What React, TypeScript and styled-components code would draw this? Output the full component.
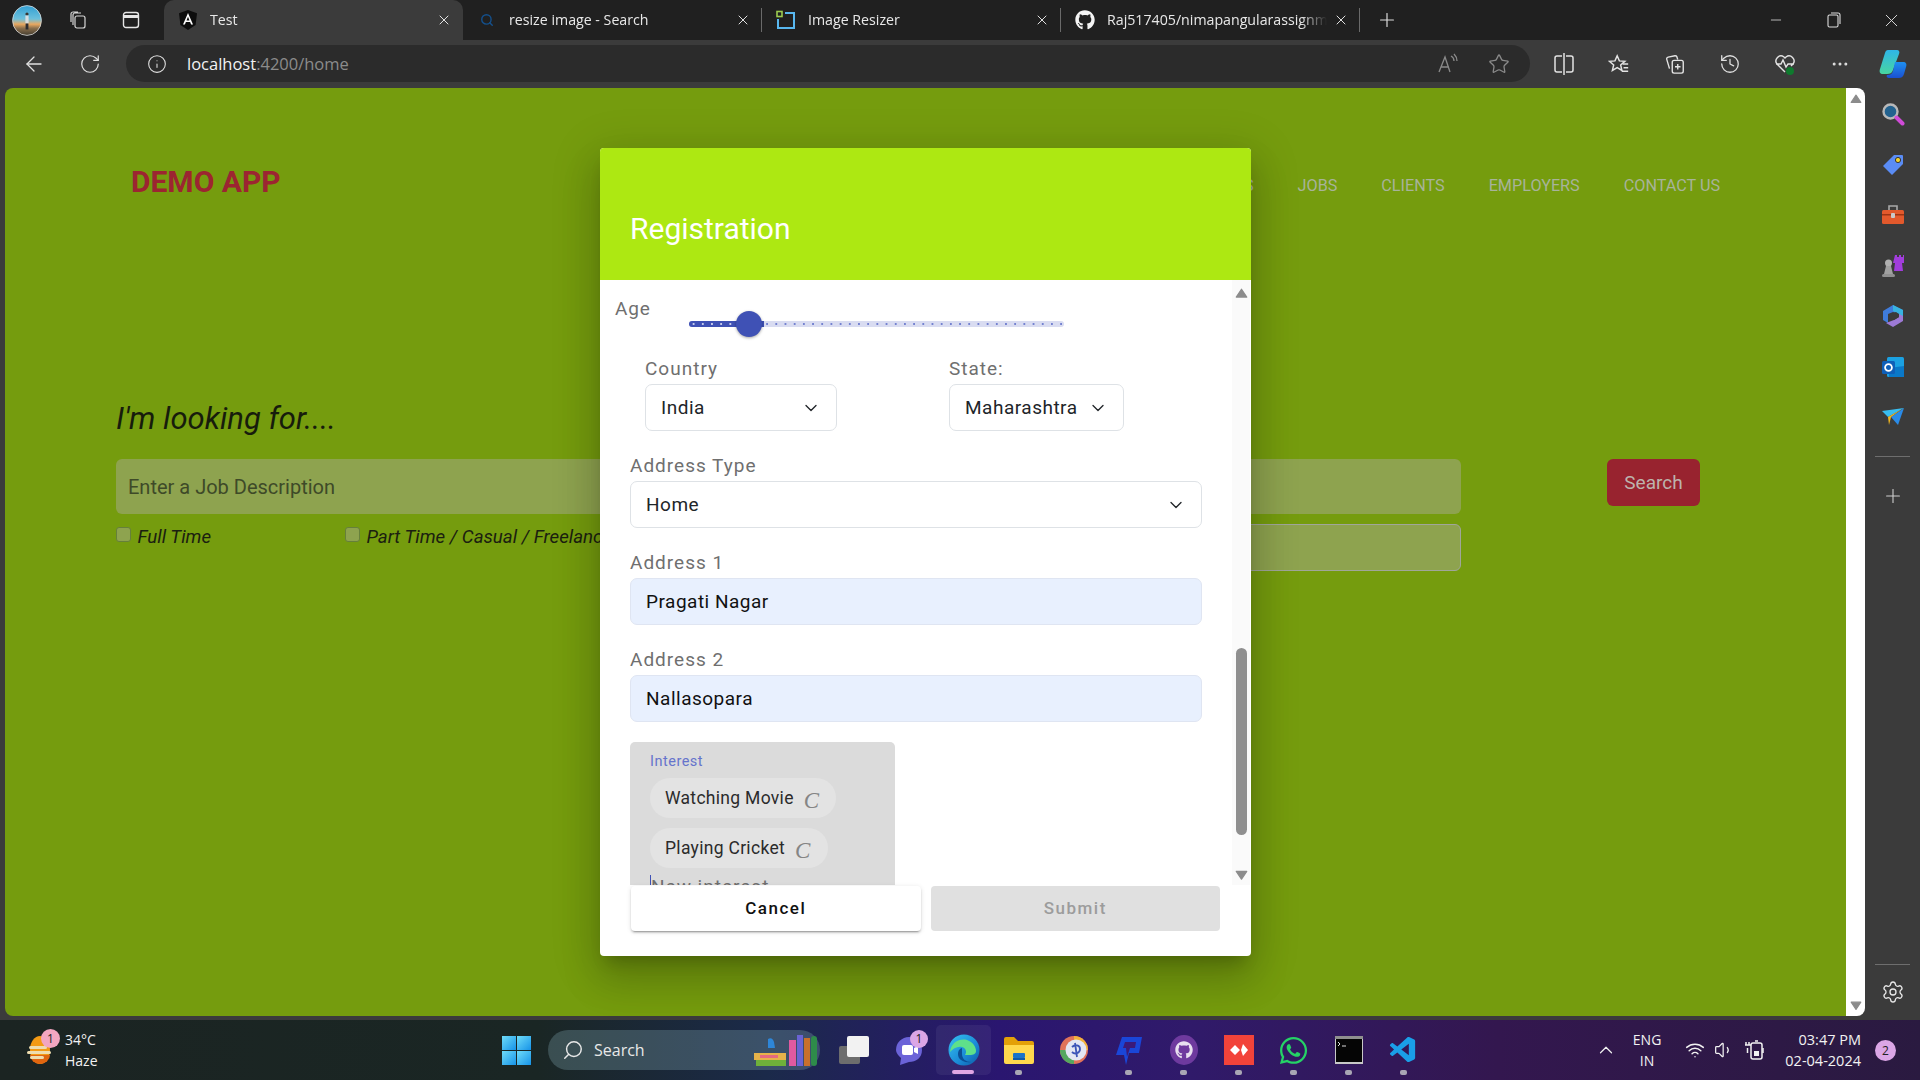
import React from "react";
import styled, { createGlobalStyle } from "styled-components";
import {
  ArrowLeft,
  ChevronDown,
  ChevronUp,
  History,
  Info,
  Minus,
  MoreHorizontal,
  Plus,
  RotateCw,
  Search as SearchIcon,
  Settings,
  Star,
  Volume1,
  Wifi,
  X,
} from "lucide-react";
import { FaGithub, FaWhatsapp } from "react-icons/fa";
import { VscVscode } from "react-icons/vsc";

const GlobalStyle = createGlobalStyle`
  html, body {
    margin: 0;
    width: 1920px;
    height: 1080px;
    overflow: hidden;
    background: #3b3b3b;
    font-family: Roboto, "Liberation Sans", sans-serif;
  }
  * { box-sizing: border-box; }
`;

const Screen = styled.div`
  width: 1920px;
  height: 1080px;
  display: flex;
  flex-direction: column;
`;

/* ---------- tab strip ---------- */

const TabStrip = styled.div`
  height: 40px;
  display: flex;
  align-items: stretch;
  background: #202020;
  color: #e8e8e8;
  font-family: "Open Sans", sans-serif;
  font-size: 14.2px;
`;

const AvatarCell = styled.div`
  width: 54px;
  display: flex;
  align-items: center;
  justify-content: center;
`;

const StripButton = styled.div<{ $width: number }>`
  width: ${(p) => p.$width}px;
  display: flex;
  align-items: center;
  justify-content: center;
  color: #dcdcdc;
`;

const TabSpacer = styled.div`
  width: 4px;
`;

const Tab = styled.div<{ $active?: boolean; $sep?: boolean }>`
  position: relative;
  width: 299px;
  display: flex;
  align-items: center;
  padding-left: 14px;
  background: ${(p) => (p.$active ? "#3b3b3b" : "transparent")};
  border-radius: ${(p) => (p.$active ? "10px 10px 0 0" : "0")};
  &::after {
    content: "";
    display: ${(p) => (p.$sep ? "block" : "none")};
    position: absolute;
    right: 0;
    top: 8px;
    height: 24px;
    width: 1px;
    background: #6a6a6a;
  }
`;

const TabIcon = styled.div`
  width: 20px;
  height: 20px;
  display: flex;
  align-items: center;
  justify-content: center;
  margin-right: 12px;
`;

const TabTitle = styled.div`
  width: 220px;
  padding-bottom: 2px;
  white-space: nowrap;
  overflow: hidden;
  -webkit-mask-image: linear-gradient(to right, #000 88%, transparent);
`;

const TabClose = styled.div`
  width: 16px;
  margin-left: 6px;
  display: flex;
  justify-content: center;
  color: #efefef;
`;

const WindowControls = styled.div`
  margin-left: auto;
  display: flex;
`;

/* ---------- toolbar ---------- */

const Toolbar = styled.div`
  height: 48px;
  display: flex;
  align-items: center;
  background: #3b3b3b;
  color: #e0e0e0;
`;

const ToolSlot = styled.div<{ $width: number }>`
  width: ${(p) => p.$width}px;
  flex: none;
  display: flex;
  align-items: center;
  justify-content: center;
`;

const AddressBar = styled.div`
  width: 1404px;
  height: 37px;
  display: flex;
  align-items: center;
  background: #2b2b2b;
  border-radius: 19px;
  padding-left: 21px;
  margin-bottom: 1px;
  font-family: "Open Sans", sans-serif;
  font-size: 16.5px;
`;

const Url = styled.div`
  margin-left: 20px;
  color: #f2f2f2;
  span {
    color: #8c8c8c;
  }
`;

const BarEnd = styled.div`
  margin-left: auto;
  display: flex;
  align-items: center;
  color: #8a8a8a;
`;

/* ---------- content ---------- */

const ContentRow = styled.div`
  height: 932px;
  display: flex;
  padding: 0 0 4px 5px;
  background: #3b3b3b;
`;

const Page = styled.div`
  position: relative;
  width: 1841px;
  background: #759c0e;
  border-radius: 8px 0 0 8px;
  overflow: hidden;
  padding-left: 111px;
  color: #1b2010;
`;

const PageScroll = styled.div`
  width: 19px;
  background: #fff;
  border-radius: 0 8px 8px 0;
  display: flex;
  flex-direction: column;
  justify-content: space-between;
  align-items: center;
  padding: 6px 0 5px;
`;

const Header = styled.header`
  display: flex;
  justify-content: space-between;
  padding: 76px 126px 0 15px;
`;

const Logo = styled.div`
  font-size: 30px;
  line-height: 36px;
  font-weight: 700;
  color: #9c2531;
`;

const Nav = styled.nav`
  display: flex;
  gap: 44px;
  padding-top: 10px;
  font-size: 16.2px;
  line-height: 24px;
  color: #a8b39a;
`;

const Heading = styled.div`
  margin-top: 199px;
  font-size: 31px;
  line-height: 40px;
  font-style: italic;
  font-weight: 400;
  color: #171c0c;
`;

const SearchGrid = styled.div`
  margin-top: 20px;
  display: grid;
  grid-template-columns: 1345px 93px;
  column-gap: 146px;
  align-items: start;
`;

const JobInput = styled.div`
  height: 55px;
  background: #8ea34f;
  border-radius: 6px;
  padding-left: 12px;
  font-size: 20px;
  line-height: 57px;
  color: #3e4a28;
`;

const BelowRow = styled.div`
  display: flex;
  margin-top: 10px;
`;

const CheckItem = styled.div<{ $width: number }>`
  width: ${(p) => p.$width}px;
  padding-top: 3px;
  display: flex;
  align-items: flex-start;
  gap: 6.5px;
  font-size: 18.7px;
  font-style: italic;
  line-height: 20px;
  white-space: nowrap;
`;

const CheckBox = styled.div`
  width: 15px;
  height: 15px;
  flex: none;
  background: #8ea34f;
  border: 1px solid #66803a;
  border-radius: 3px;
`;

const LocationInput = styled.div`
  margin-left: auto;
  width: 800px;
  height: 47px;
  background: #8ea34f;
  border: 1px solid #a0a69a;
  border-radius: 6px;
`;

const SearchButton = styled.div`
  height: 47px;
  background: #98232f;
  border-radius: 6px;
  color: #bdb3ad;
  font-size: 19px;
  line-height: 47px;
  text-align: center;
`;

/* ---------- dialog ---------- */

const Dialog = styled.div`
  position: absolute;
  left: 595px;
  top: 60px;
  width: 651px;
  height: 808px;
  background: #fff;
  border-radius: 4px;
  overflow: hidden;
  display: flex;
  flex-direction: column;
  box-shadow: 0 11px 15px -7px rgba(0, 0, 0, 0.2),
    0 24px 38px 3px rgba(0, 0, 0, 0.14), 0 9px 46px 8px rgba(0, 0, 0, 0.12);
`;

const DialogHeader = styled.div`
  height: 132px;
  flex: none;
  padding: 61px 0 0 30px;
  background: #ade812;
  color: #fff;
  font-size: 30px;
  line-height: 40px;
`;

const DialogBody = styled.div`
  height: 605px;
  flex: none;
  display: flex;
`;

const Form = styled.div`
  width: 632px;
  height: 605px;
  overflow: hidden;
  padding-top: 17px;
`;

const DialogScroll = styled.div`
  position: relative;
  width: 18px;
  background: #fafafa;
  display: flex;
  flex-direction: column;
  justify-content: space-between;
  align-items: center;
  padding: 8px 0 5px 1px;
`;

const ScrollThumb = styled.div`
  position: absolute;
  top: 368px;
  left: 4px;
  width: 11px;
  height: 187px;
  border-radius: 6px;
  background: #8f8f8f;
`;

const AgeRow = styled.div`
  display: flex;
  height: 40px;
  padding-left: 15px;
`;

const AgeLabel = styled.div`
  width: 74px;
  font-size: 19px;
  line-height: 24px;
  letter-spacing: 0.9px;
  color: #6f6f6f;
`;

const Slider = styled.div`
  position: relative;
  width: 375px;
  height: 6px;
  margin-top: 24px;
  border-radius: 3px;
  background: #d9dcf1;
`;

const TickLayer = styled.div`
  position: absolute;
  inset: 0;
  border-radius: 3px;
  background-image: radial-gradient(circle, #7482d0 0.8px, transparent 1.1px);
  background-size: 9.2px 6px;
`;

const SliderActive = styled.div`
  position: absolute;
  left: 0;
  top: 0;
  bottom: 0;
  width: 75px;
  border-radius: 3px 0 0 3px;
  background-color: #3f51b5;
  background-image: radial-gradient(circle, #c5cbec 0.8px, transparent 1.1px);
  background-size: 9.2px 6px;
`;

const SliderThumb = styled.div`
  position: absolute;
  left: 47px;
  top: -10px;
  width: 26px;
  height: 26px;
  border-radius: 50%;
  background: #3f51b5;
  box-shadow: 0 1px 3px rgba(0, 0, 0, 0.35);
`;

const LocationRow = styled.div`
  display: flex;
  gap: 112px;
  padding-left: 45px;
`;

const Field = styled.div<{ $width: number }>`
  width: ${(p) => p.$width}px;
  margin-top: 21px;
`;

const FieldLabel = styled.div`
  font-size: 19px;
  line-height: 22px;
  letter-spacing: 1px;
  color: #6f6f6f;
  margin-bottom: 4px;
  white-space: nowrap;
`;

const Control = styled.div<{ $filled?: boolean }>`
  height: 47px;
  display: flex;
  align-items: center;
  justify-content: space-between;
  padding: 0 15px;
  border: 1px solid ${(p) => (p.$filled ? "#dfe5f2" : "#dee2e6")};
  border-radius: 7px;
  background: ${(p) => (p.$filled ? "#e8f0fe" : "#fff")};
  font-size: 19px;
  letter-spacing: 0.5px;
  color: #212529;
  svg {
    flex: none;
  }
`;

const FilledText = styled.span`
  color: #111;
`;

const StackedFields = styled.div`
  margin-top: 24px;
  display: flex;
  flex-direction: column;
  gap: 24px;
  padding-left: 30px;
`;

const PlainField = styled.div`
  width: 572px;
`;

const InterestBox = styled.div`
  width: 265px;
  height: 200px;
  margin: 20px 0 0 30px;
  padding: 12px 16px 0 20px;
  background: #dbdbdb;
  border-radius: 5px 5px 0 0;
  display: flex;
  flex-direction: column;
  align-items: flex-start;
`;

const InterestLabel = styled.div`
  font-size: 14.5px;
  line-height: 16px;
  letter-spacing: 0.5px;
  color: #6674cc;
  margin-bottom: 8px;
`;

const Chip = styled.div`
  height: 40px;
  margin-bottom: 10px;
  padding: 0 17px 0 15px;
  display: flex;
  align-items: center;
  gap: 10px;
  border-radius: 20px;
  background: #e3e3e3;
  font-size: 17.5px;
  letter-spacing: 0.3px;
  color: #2b2b2b;
`;

const ChipRemove = styled.span`
  font-family: "Liberation Serif", serif;
  font-style: italic;
  font-size: 23px;
  line-height: 22px;
  margin-top: 5px;
  color: #858585;
`;

const NewInterest = styled.div`
  margin-top: -3px;
  height: 24px;
  border-left: 1px solid #3f51b5;
  font-size: 19px;
  line-height: 24px;
  letter-spacing: 1px;
  color: #6f6f6f;
  white-space: nowrap;
`;

const Actions = styled.div`
  flex: none;
  display: flex;
  gap: 10px;
  padding: 1px 0 0 31px;
`;

const ActionButton = styled.div<{ $disabled?: boolean }>`
  width: 289.5px;
  height: 45px;
  border-radius: 4px;
  text-align: center;
  font-size: 17px;
  font-weight: 500;
  line-height: 45px;
  letter-spacing: 1.5px;
  background: ${(p) => (p.$disabled ? "#e0e0e0" : "#fff")};
  color: ${(p) => (p.$disabled ? "#9c9c9c" : "#111")};
  box-shadow: ${(p) =>
    p.$disabled
      ? "none"
      : "0 3px 1px -2px rgba(0,0,0,.2), 0 2px 2px 0 rgba(0,0,0,.14), 0 1px 5px 0 rgba(0,0,0,.12)"};
`;

/* ---------- edge sidebar ---------- */

const SideBar = styled.aside`
  width: 55px;
  margin-bottom: -4px;
  display: flex;
  flex-direction: column;
  align-items: center;
  padding: 1px 0 3px;
  color: #cfcfcf;
`;

const SideSlot = styled.div`
  width: 100%;
  height: 50.5px;
  flex: none;
  display: flex;
  align-items: center;
  justify-content: center;
`;

const SideRule = styled.div<{ $auto?: boolean }>`
  width: 35px;
  height: 1px;
  flex: none;
  background: #6e6e6e;
  margin-top: ${(p) => (p.$auto ? "auto" : "13px")};
  margin-bottom: ${(p) => (p.$auto ? "2px" : "28px")};
`;

/* ---------- taskbar ---------- */

const Taskbar = styled.footer`
  height: 60px;
  display: flex;
  align-items: center;
  color: #f2f2f2;
  font-family: "Open Sans", sans-serif;
  font-size: 14px;
  background: linear-gradient(
    90deg,
    #1b2422 0%,
    #1a2624 28%,
    #1b2a4a 40%,
    #2a1670 52%,
    #301a6a 62%,
    #33174f 78%,
    #2a1a40 100%
  );
`;

const Weather = styled.div`
  width: 489px;
  display: flex;
  align-items: center;
  padding-left: 24px;
`;

const WeatherIcon = styled.div`
  position: relative;
  width: 30px;
  height: 30px;
  margin-right: 11px;
`;

const Badge = styled.div<{ $color: string; $size: number; $top: number; $left: number }>`
  position: absolute;
  width: ${(p) => p.$size}px;
  height: ${(p) => p.$size}px;
  top: ${(p) => p.$top}px;
  left: ${(p) => p.$left}px;
  border-radius: 50%;
  background: ${(p) => p.$color};
  color: #222;
  font-size: 12px;
  line-height: ${(p) => p.$size}px;
  text-align: center;
`;

const TwoLines = styled.div<{ $align?: string }>`
  display: flex;
  flex-direction: column;
  gap: 4px;
  line-height: 17px;
  text-align: ${(p) => p.$align ?? "left"};
`;

const Clock = styled(TwoLines)`
  font-size: 14.5px;
`;

const TaskSlot = styled.div<{ $active?: boolean }>`
  position: relative;
  width: 55px;
  height: 50px;
  flex: none;
  display: flex;
  align-items: center;
  justify-content: center;
  border-radius: 5px;
  background: ${(p) => (p.$active ? "rgba(255,255,255,.06)" : "transparent")};
`;

const RunDot = styled.div`
  position: absolute;
  bottom: 0;
  left: 24px;
  width: 7px;
  height: 5px;
  border-radius: 2px;
  background: #a9a6b4;
`;

const ActiveBar = styled.div`
  position: absolute;
  bottom: 1px;
  left: 16px;
  width: 22px;
  height: 4px;
  border-radius: 2px;
  background: #e0a6e4;
`;

const TaskSearch = styled.div`
  width: 272px;
  height: 40px;
  margin: 0 6px 0 4px;
  flex: none;
  display: flex;
  align-items: center;
  padding-left: 14px;
  border-radius: 20px;
  background: rgba(125, 160, 170, 0.33);
  font-size: 16px;
  color: #e8e8e8;
`;

const TaskSearchText = styled.span`
  margin-left: 10px;
`;

const Books = styled.div`
  margin-left: auto;
  display: flex;
`;

const Tray = styled.div`
  margin-left: auto;
  display: flex;
  align-items: center;
  padding-right: 24px;
`;

const TrayLang = styled(TwoLines)`
  margin: 0 24px 0 16px;
  text-align: center;
`;

const TrayIcons = styled.div`
  display: flex;
  align-items: center;
  gap: 9px;
  margin-right: 20px;
`;

const Notify = styled.div`
  width: 21px;
  height: 21px;
  margin-left: 14px;
  border-radius: 50%;
  background: #dba6e6;
  color: #222;
  font-size: 12px;
  line-height: 21px;
  text-align: center;
`;

/* ---------- drawn icons ---------- */

const Triangle: React.FC<{ down?: boolean; width: number }> = ({ down, width }) => (
  <svg width={width} height={width * 0.8} viewBox="0 0 10 8">
    <path d={down ? "M1 1h8L5 7z" : "M5 1l4 6H1z"} fill="#8c8c8c" stroke="#8c8c8c" strokeLinejoin="round" />
  </svg>
);

const Avatar = () => (
  <svg width="30" height="31" viewBox="0 0 30 31">
    <defs>
      <clipPath id="avatar-clip">
        <ellipse cx="15" cy="15.5" rx="14.5" ry="15" />
      </clipPath>
      <linearGradient id="avatar-sky" x1="0" y1="0" x2="0" y2="1">
        <stop offset="0" stopColor="#2f9ed3" />
        <stop offset="0.45" stopColor="#6cc0dc" />
        <stop offset="0.62" stopColor="#e9a860" />
        <stop offset="0.75" stopColor="#8b6f4c" />
        <stop offset="1" stopColor="#3c382e" />
      </linearGradient>
    </defs>
    <g clipPath="url(#avatar-clip)">
      <rect width="30" height="31" fill="url(#avatar-sky)" />
      <circle cx="15" cy="9" r="1.6" fill="#3a3530" />
      <rect x="13.4" y="10.5" width="3.2" height="8" fill="#d8dde0" />
      <rect x="13.6" y="18.5" width="2.8" height="6" fill="#2c2c30" />
    </g>
    <ellipse cx="15" cy="15.5" rx="14.4" ry="14.9" fill="none" stroke="#d8d8d8" strokeWidth="0.8" />
  </svg>
);

const Workspaces = () => (
  <svg width="20" height="20" viewBox="0 0 20 20" fill="none" stroke="#d8d8d8" strokeWidth="1.2">
    <rect x="7" y="6" width="10" height="12" rx="2" />
    <path d="M5 15V5a2 2 0 0 1 2-2h6M3 12V4a2 2 0 0 1 2-2h5" />
  </svg>
);

const TabsIcon = () => (
  <svg width="18" height="18" viewBox="0 0 18 18" fill="none" stroke="#e6e6e6" strokeWidth="1.4">
    <rect x="1.5" y="1.5" width="15" height="15" rx="2.5" />
    <path d="M1.5 5.5h15" strokeWidth="3" />
  </svg>
);

const AngularIcon = () => (
  <svg width="20" height="20" viewBox="0 0 20 20">
    <path d="M10 0L1 3.3l1.4 11.6L10 20l7.6-5.1L19 3.3z" fill="#0d0d0d" />
    <path d="M10 3L5 14.5h1.9l1-2.6h4.2l1 2.6H15zm-1.5 7.4L10 6.8l1.5 3.6z" fill="#fff" />
  </svg>
);

const ResizerIcon = () => (
  <svg width="20" height="20" viewBox="0 0 20 20" fill="none">
    <path d="M9 3h9v15H2V9" stroke="#58b7ef" strokeWidth="2" />
    <rect x="1" y="1.5" width="5" height="5" stroke="#9ccc50" strokeWidth="1.6" />
  </svg>
);

const ReadAloud = () => (
  <svg width="24" height="22" viewBox="0 0 24 22" fill="none" stroke="#8a8a8a" strokeWidth="1.3">
    <path d="M2 19L8 4l5 15M4 14h8" />
    <path d="M14 3c2 1 3 3 3 5M17 1c2 2 3 4 3 7" />
  </svg>
);

const SplitScreen = () => (
  <svg width="22" height="24" viewBox="0 0 22 24" fill="none" stroke="#e4e4e4" strokeWidth="1.5">
    <path d="M9 4H4a2 2 0 0 0-2 2v12a2 2 0 0 0 2 2h5M13 4h5a2 2 0 0 1 2 2v12a2 2 0 0 1-2 2h-5M11 1v22" />
  </svg>
);

const FavList = () => (
  <svg width="22" height="22" viewBox="0 0 24 24" fill="none" stroke="#e4e4e4" strokeWidth="1.6">
    <path d="M10 3l2.4 5.6 6 .5-4.6 4 1.4 5.9L10 16l-5.2 3 1.4-5.9-4.6-4 6-.5z" />
    <path d="M16 12h6M17 16h5M15 20h7" />
  </svg>
);

const Collections = () => (
  <svg width="22" height="22" viewBox="0 0 24 24" fill="none" stroke="#e4e4e4" strokeWidth="1.5">
    <path d="M6 17L3 7a2 2 0 0 1 1.5-2.5L12 3a2 2 0 0 1 2 1l1 3" />
    <rect x="9" y="8" width="12" height="14" rx="2" />
    <path d="M15 12v6M12 15h6" />
  </svg>
);

const Health = () => (
  <svg width="24" height="24" viewBox="0 0 24 24" fill="none">
    <path
      d="M12 20L4 12a5 5 0 0 1 7-7l1 1 1-1a5 5 0 0 1 7 7l-2 2M3 12h5l2-4 3 7 2-3h6"
      stroke="#e4e4e4"
      strokeWidth="1.4"
    />
    <circle cx="17" cy="19" r="4" fill="#0f7a2e" />
  </svg>
);

const CopilotLogo = () => (
  <svg width="28" height="30" viewBox="0 0 28 30">
    <defs>
      <linearGradient id="cp-a" x1="0" y1="0" x2="0" y2="1">
        <stop offset="0" stopColor="#2fb5e8" />
        <stop offset="1" stopColor="#48d6a0" />
      </linearGradient>
      <linearGradient id="cp-b" x1="0" y1="0" x2="0" y2="1">
        <stop offset="0" stopColor="#1e90f0" />
        <stop offset="1" stopColor="#1a50d0" />
      </linearGradient>
    </defs>
    <path d="M9 1h9c2 0 3 2 2 4L14 21c-1 3-3 4-6 4H4c-3 0-4-2-3-5L6 4c.5-2 1.5-3 3-3z" fill="url(#cp-a)" />
    <path d="M16 13h8c3 0 4 2 3 5l-2 7c-1 3-3 4-5 4H10c-2 0-3-2-2-3 3 0 5-1 6-4z" fill="url(#cp-b)" />
  </svg>
);

const SideMagnifier = () => (
  <svg width="24" height="24" viewBox="0 0 24 24">
    <circle cx="9.5" cy="9.5" r="7" fill="#23628f" stroke="#b8b8b8" strokeWidth="2.4" />
    <path d="M15.5 15.5l6 6" stroke="#d04bd8" strokeWidth="4" strokeLinecap="round" />
  </svg>
);

const SideTag = () => (
  <svg width="24" height="24" viewBox="0 0 24 24">
    <path d="M13 2h8a1 1 0 0 1 1 1v8L11 22 2 13z" fill="#5a8cf5" strokeLinejoin="round" />
    <circle cx="17" cy="7" r="2.6" fill="#f2d22e" stroke="#333" />
  </svg>
);

const SideToolbox = () => (
  <svg width="24" height="22" viewBox="0 0 24 22">
    <path d="M8 6V2h8v4" fill="none" stroke="#a8a8a8" strokeWidth="1.6" />
    <rect x="1" y="6" width="22" height="14" rx="1.5" fill="#e2592c" />
    <rect x="1" y="10" width="22" height="1.5" fill="#9e3413" />
    <rect x="10" y="9" width="4" height="5" rx="1" fill="#c9c9c9" />
  </svg>
);

const SideChess = () => (
  <svg width="24" height="24" viewBox="0 0 24 24">
    <path d="M14 1h2v2h2V1h2v2h2V1h1v8h-2l1 8h-9l1-8h-2z" fill="#a13ddc" />
    <circle cx="7.5" cy="9" r="3.5" fill="#b0b0b0" />
    <path d="M5 12h5l2 8H3z" fill="#a0a0a0" />
    <rect x="1" y="20" width="13" height="3" rx="1.5" fill="#909090" />
  </svg>
);

const SideM365 = () => (
  <svg width="22" height="24" viewBox="0 0 22 24">
    <path d="M11 1l10 5-4 4-6-2-5 2v9L1 16V7z" fill="#3f7cdc" />
    <path d="M21 6v11l-10 6-7-4 8-3 5-3v-3z" fill="#9d7ad6" />
    <path d="M11 1l10 5v6l-4-2-6-3z" fill="#38b3e0" />
    <path d="M8 10l6-2 3 2v3l-5 3-4-2z" fill="#3b3b3b" />
  </svg>
);

const SideOutlook = () => (
  <svg width="24" height="22" viewBox="0 0 24 22">
    <rect x="6" y="1" width="17" height="20" rx="1.5" fill="#1ba1e2" />
    <path d="M8 12l15-2v11H8z" fill="#0a78c8" />
    <rect x="1" y="5" width="13" height="13" rx="1.5" fill="#0f5fb8" />
    <circle cx="7.5" cy="11.5" r="3.4" fill="none" stroke="#fff" strokeWidth="1.8" />
  </svg>
);

const SidePlane = () => (
  <svg width="24" height="20" viewBox="0 0 24 20">
    <path d="M1 4l22-3L7 10z" fill="#38bdf0" />
    <path d="M23 1L17 18l-7-8z" fill="#2a8be8" />
    <path d="M7 10l14-8-11 8-2 8z" fill="#f2b71f" />
  </svg>
);

const WeatherGlyph = () => (
  <svg width="30" height="30" viewBox="0 0 30 30">
    <ellipse cx="16" cy="15" rx="10" ry="14" fill="#f39a14" />
    <path d="M6 20a10 9 0 0 0 20 0z" fill="#e0650f" />
    <g fill="#eedcae">
      <rect x="5" y="11" width="18" height="3" rx="1.5" />
      <rect x="3" y="16" width="24" height="3" rx="1.5" />
      <rect x="6" y="21" width="14" height="3" rx="1.5" />
    </g>
  </svg>
);

const WindowsLogo = () => (
  <svg width="29" height="29" viewBox="0 0 29 29">
    <defs>
      <linearGradient id="win" x1="0" y1="0" x2="1" y2="1">
        <stop offset="0" stopColor="#6fdcf8" />
        <stop offset="1" stopColor="#1693e8" />
      </linearGradient>
    </defs>
    <rect width="14" height="14" fill="url(#win)" />
    <rect x="15" width="14" height="14" fill="url(#win)" />
    <rect y="15" width="14" height="14" fill="url(#win)" />
    <rect x="15" y="15" width="14" height="14" fill="url(#win)" />
  </svg>
);

const BookStack = () => (
  <svg width="66" height="34" viewBox="0 0 66 34">
    <path d="M14 6c3-2 5 0 6 3l1 6h-7z" fill="#2e86d8" />
    <rect x="0" y="20" width="32" height="7" fill="#e6b24a" />
    <rect x="2" y="27" width="30" height="6" fill="#6fb13a" />
    <rect x="6" y="22" width="18" height="3" fill="#e56a7e" />
    <rect x="35" y="7" width="7" height="26" fill="#e05aa0" />
    <rect x="43" y="2" width="6" height="31" fill="#6a63d4" />
    <rect x="50" y="5" width="6" height="28" fill="#c8702c" />
    <rect x="57" y="3" width="6" height="30" rx="3" fill="#2e8b4a" />
  </svg>
);

const TaskView = () => (
  <svg width="30" height="28" viewBox="0 0 30 28">
    <rect x="0" y="10" width="21" height="18" rx="2" fill="#6d6d6d" />
    <rect x="8" y="0" width="22" height="21" rx="2" fill="#f2f2f2" />
  </svg>
);

const ChatIcon = () => (
  <svg width="30" height="30" viewBox="0 0 30 30">
    <path d="M15 2a13 13 0 0 1 13 13c0 8-6 12-13 12l-9 3 1-7C4 20 2 18 2 15A13 13 0 0 1 15 2z" fill="#6b63d8" />
    <rect x="8" y="10" width="11" height="10" rx="2" fill="#fff" />
    <path d="M20 13l4-2v8l-4-2z" fill="#fff" />
  </svg>
);

const EdgeIcon = () => (
  <svg width="32" height="32" viewBox="0 0 32 32">
    <defs>
      <linearGradient id="edge" x1="0" y1="0" x2="1" y2="1">
        <stop offset="0" stopColor="#35c1f1" />
        <stop offset="0.6" stopColor="#1a8ad6" />
        <stop offset="1" stopColor="#0c59a4" />
      </linearGradient>
    </defs>
    <circle cx="16" cy="16" r="15.5" fill="url(#edge)" />
    <path d="M2 18C3 8 12 4 19 6c6 2 9 7 9 11 0 3-3 4-6 4h-5c2-3 1-7-3-8-5-1-9 2-12 5z" fill="#5fe08a" />
    <path d="M14 14c-4 1-5 6-3 10 2 3 7 5 12 4-5 0-9-3-9-8z" fill="#0b4f96" />
  </svg>
);

const FolderIcon = () => (
  <svg width="30" height="28" viewBox="0 0 30 28">
    <path d="M0 3a2 2 0 0 1 2-2h8l4 4h14a2 2 0 0 1 2 2v3H0z" fill="#e3a008" />
    <path d="M0 9h30v17a2 2 0 0 1-2 2H2a2 2 0 0 1-2-2z" fill="#ffd84d" />
    <rect x="9" y="17" width="12" height="5" rx="1" fill="#1a73c9" />
    <rect x="9" y="22" width="12" height="2" fill="#0f5aa8" />
  </svg>
);

const SwirlIcon = () => (
  <svg width="28" height="30" viewBox="0 0 28 30">
    <circle cx="14" cy="15" r="14" fill="#e0735a" />
    <path d="M14 1a14 14 0 0 1 14 14H14z" fill="#f2b23c" />
    <path d="M0 15a14 14 0 0 0 14 14v-14z" fill="#54a85f" />
    <circle cx="16" cy="15" r="10.5" fill="#e3e6f2" />
    <path d="M12 12c3-3 8-2 8 2s-5 6-8 3M15 8l2 14" stroke="#3d55b8" strokeWidth="1.8" fill="none" />
  </svg>
);

const PIcon = () => (
  <svg width="30" height="30" viewBox="0 0 30 30">
    <path d="M8 2h20l-3 16H15l-3 12-2-10H2z" fill="#1a46d8" />
    <path d="M11 7h11l-1 6h-5l-3 9-1-9H9z" fill="#3b1a78" />
  </svg>
);

const GithubTile = () => (
  <svg width="28" height="30" viewBox="0 0 28 30">
    <ellipse cx="14" cy="15" rx="14" ry="15" fill="#6e3a9e" />
    <svg x="5" y="6" width="18" height="18" viewBox="0 0 496 512">
      <path
        fill="#e8e0f0"
        d="M165.9 397.4c0 2-2.3 3.6-5.2 3.6-3.3.3-5.6-1.3-5.6-3.6 0-2 2.3-3.6 5.2-3.6 3-.3 5.6 1.3 5.6 3.6zM244.8 8C106.1 8 0 113.3 0 252c0 110.9 69.8 205.8 169.5 239.2 12.8 2.3 17.3-5.6 17.3-12.1 0-6.2-.3-40.4-.3-61.4 0 0-70 15-84.7-29.8 0 0-11.4-29.1-27.8-36.6 0 0-22.9-15.7 1.6-15.4 0 0 24.9 2 38.6 25.8 21.9 38.6 58.6 27.5 72.9 20.9 2.3-16 8.8-27.1 16-33.7-55.9-6.2-112.3-14.3-112.3-110.5 0-27.5 7.6-41.3 23.6-58.9-2.6-6.5-11.1-33.3 2.6-67.9 20.9-6.5 69 27 69 27 20-5.6 41.5-8.5 62.8-8.5s42.8 2.9 62.8 8.5c0 0 48.1-33.6 69-27 13.7 34.7 5.2 61.4 2.6 67.9 16 17.7 25.8 31.5 25.8 58.9 0 96.5-58.9 104.2-114.8 110.5 9.2 7.9 17 22.9 17 46.4 0 33.7-.3 75.4-.3 83.6 0 6.5 4.6 14.4 17.3 12.1C428.2 457.8 496 362.9 496 252 496 113.3 383.5 8 244.8 8z"
      />
    </svg>
  </svg>
);

const RedTile = () => (
  <svg width="30" height="30" viewBox="0 0 30 30">
    <rect width="30" height="30" fill="#f2433a" />
    <path d="M11 10l5 5-5 5-5-5zM19 9l5 6-5 6-2-6z" fill="#fff" />
  </svg>
);

const TerminalIcon = () => (
  <svg width="28" height="28" viewBox="0 0 28 28">
    <rect width="28" height="28" fill="#c8c8c8" />
    <rect y="0" width="28" height="3" fill="#8f8f8f" />
    <rect x="1" y="3" width="26" height="23" fill="#050505" />
    <path d="M3 6l2 2-2 2M7 10h4" stroke="#ddd" fill="none" />
  </svg>
);

const BatteryPlug = () => (
  <svg width="22" height="22" viewBox="0 0 22 22" fill="none" stroke="#f2f2f2" strokeWidth="1.5">
    <rect x="8" y="4" width="11" height="16" rx="2" />
    <path d="M12 2h3M20 9v5" />
    <path d="M2 6h6M3 3v3M6 3v3M4.5 9v5" />
    <rect x="11" y="12" width="5" height="5" fill="#f2f2f2" stroke="none" />
  </svg>
);

const tabs = [
  { title: "Test", icon: <AngularIcon />, active: true, sep: false },
  { title: "resize image - Search", icon: <SearchIcon size={14} color="#14508c" strokeWidth={2.4} />, active: false, sep: true },
  { title: "Image Resizer", icon: <ResizerIcon />, active: false, sep: true },
  { title: "Raj517405/nimapangularassignment", icon: <FaGithub size={20} color="#f4f4f4" />, active: false, sep: true },
];

const sideIcons = [
  <SideMagnifier key="search" />,
  <SideTag key="tag" />,
  <SideToolbox key="tools" />,
  <SideChess key="games" />,
  <SideM365 key="m365" />,
  <SideOutlook key="outlook" />,
  <SidePlane key="drop" />,
];

const interests = ["Watching Movie", "Playing Cricket"];

export default function App() {
  return (
    <Screen>
      <GlobalStyle />
      <TabStrip>
        <AvatarCell>
          <Avatar />
        </AvatarCell>
        <StripButton $width={47}>
          <Workspaces />
        </StripButton>
        <StripButton $width={59}>
          <TabsIcon />
        </StripButton>
        <TabSpacer />
        {tabs.map((t) => (
          <Tab key={t.title} $active={t.active} $sep={t.sep}>
            <TabIcon>{t.icon}</TabIcon>
            <TabTitle>{t.title}</TabTitle>
            <TabClose>
              <X size={16} strokeWidth={1.4} />
            </TabClose>
          </Tab>
        ))}
        <StripButton $width={54}>
          <Plus size={22} strokeWidth={1.3} />
        </StripButton>
        <WindowControls>
          <StripButton $width={58}>
            <Minus size={16} strokeWidth={1.2} />
          </StripButton>
          <StripButton $width={58}>
            <svg width="14" height="16" viewBox="0 0 14 16" fill="none" stroke="#dcdcdc" strokeWidth="1.1">
              <rect x="1" y="3" width="10" height="12" rx="1.5" />
              <path d="M4 1h7a2 2 0 0 1 2 2v9" />
            </svg>
          </StripButton>
          <StripButton $width={57}>
            <X size={21} strokeWidth={1.1} />
          </StripButton>
        </WindowControls>
      </TabStrip>

      <Toolbar>
        <ToolSlot $width={68}>
          <ArrowLeft size={24} strokeWidth={1.3} />
        </ToolSlot>
        <ToolSlot $width={44}>
          <RotateCw size={22} strokeWidth={1.3} />
        </ToolSlot>
        <ToolSlot $width={14} />
        <AddressBar>
          <Info size={20} strokeWidth={1.3} />
          <Url>
            localhost<span>:4200/home</span>
          </Url>
          <BarEnd>
            <ToolSlot $width={55}>
              <ReadAloud />
            </ToolSlot>
            <ToolSlot $width={45}>
              <Star size={22} strokeWidth={1.4} />
            </ToolSlot>
            <ToolSlot $width={9} />
          </BarEnd>
        </AddressBar>
        <ToolSlot $width={6} />
        <ToolSlot $width={55}>
          <SplitScreen />
        </ToolSlot>
        <ToolSlot $width={56}>
          <FavList />
        </ToolSlot>
        <ToolSlot $width={55}>
          <Collections />
        </ToolSlot>
        <ToolSlot $width={55}>
          <History size={22} strokeWidth={1.4} />
        </ToolSlot>
        <ToolSlot $width={55}>
          <Health />
        </ToolSlot>
        <ToolSlot $width={55}>
          <MoreHorizontal size={20} strokeWidth={1.6} />
        </ToolSlot>
        <ToolSlot $width={52}>
          <CopilotLogo />
        </ToolSlot>
      </Toolbar>

      <ContentRow>
        <Page>
          <Header>
            <Logo>DEMO APP</Logo>
            <Nav>
              <span>SERVICES</span>
              <span>JOBS</span>
              <span>CLIENTS</span>
              <span>EMPLOYERS</span>
              <span>CONTACT US</span>
            </Nav>
          </Header>
          <Heading>I'm looking for....</Heading>
          <SearchGrid>
            <div>
              <JobInput>Enter a Job Description</JobInput>
              <BelowRow>
                <CheckItem $width={229}>
                  <CheckBox />
                  Full Time
                </CheckItem>
                <CheckItem $width={220}>
                  <CheckBox />
                  Part Time / Casual / Freelance
                </CheckItem>
                <LocationInput />
              </BelowRow>
            </div>
            <SearchButton>Search</SearchButton>
          </SearchGrid>

          <Dialog>
            <DialogHeader>Registration</DialogHeader>
            <DialogBody>
              <Form>
                <AgeRow>
                  <AgeLabel>Age</AgeLabel>
                  <Slider>
                    <TickLayer />
                    <SliderActive />
                    <SliderThumb />
                  </Slider>
                </AgeRow>
                <LocationRow>
                  <Field $width={192}>
                    <FieldLabel>Country</FieldLabel>
                    <Control>
                      India
                      <ChevronDown size={20} strokeWidth={1.6} />
                    </Control>
                  </Field>
                  <Field $width={175}>
                    <FieldLabel>State:</FieldLabel>
                    <Control>
                      Maharashtra
                      <ChevronDown size={20} strokeWidth={1.6} />
                    </Control>
                  </Field>
                </LocationRow>
                <StackedFields>
                  <PlainField>
                    <FieldLabel>Address Type</FieldLabel>
                    <Control>
                      Home
                      <ChevronDown size={20} strokeWidth={1.6} />
                    </Control>
                  </PlainField>
                  <PlainField>
                    <FieldLabel>Address 1</FieldLabel>
                    <Control $filled>
                      <FilledText>Pragati Nagar</FilledText>
                    </Control>
                  </PlainField>
                  <PlainField>
                    <FieldLabel>Address 2</FieldLabel>
                    <Control $filled>
                      <FilledText>Nallasopara</FilledText>
                    </Control>
                  </PlainField>
                </StackedFields>
                <InterestBox>
                  <InterestLabel>Interest</InterestLabel>
                  {interests.map((name) => (
                    <Chip key={name}>
                      {name}
                      <ChipRemove>C</ChipRemove>
                    </Chip>
                  ))}
                  <NewInterest>New interest</NewInterest>
                </InterestBox>
              </Form>
              <DialogScroll>
                <Triangle width={13} />
                <ScrollThumb />
                <Triangle width={13} down />
              </DialogScroll>
            </DialogBody>
            <Actions>
              <ActionButton>Cancel</ActionButton>
              <ActionButton $disabled>Submit</ActionButton>
            </Actions>
          </Dialog>
        </Page>
        <PageScroll>
          <Triangle width={12} />
          <Triangle width={12} down />
        </PageScroll>
        <SideBar>
          {sideIcons.map((icon) => (
            <SideSlot key={icon.key}>{icon}</SideSlot>
          ))}
          <SideRule />
          <Plus size={22} strokeWidth={1.2} />
          <SideRule $auto />
          <SideSlot>
            <Settings size={24} strokeWidth={1.3} color="#e8e8e8" />
          </SideSlot>
        </SideBar>
      </ContentRow>

      <Taskbar>
        <Weather>
          <WeatherIcon>
            <WeatherGlyph />
            <Badge $color="#f2a6c0" $size={19} $top={-6} $left={17}>
              1
            </Badge>
          </WeatherIcon>
          <TwoLines>
            <span>34°C</span>
            <span>Haze</span>
          </TwoLines>
        </Weather>
        <TaskSlot>
          <WindowsLogo />
        </TaskSlot>
        <TaskSearch>
          <SearchIcon size={22} strokeWidth={1.6} style={{ transform: "scaleX(-1)" }} />
          <TaskSearchText>Search</TaskSearchText>
          <Books>
            <BookStack />
          </Books>
        </TaskSearch>
        <TaskSlot>
          <TaskView />
        </TaskSlot>
        <TaskSlot>
          <ChatIcon />
          <Badge $color="#dba6e6" $size={18} $top={5} $left={29}>
            1
          </Badge>
        </TaskSlot>
        <TaskSlot $active>
          <EdgeIcon />
          <ActiveBar />
        </TaskSlot>
        <TaskSlot>
          <FolderIcon />
          <RunDot />
        </TaskSlot>
        <TaskSlot>
          <SwirlIcon />
        </TaskSlot>
        <TaskSlot>
          <PIcon />
          <RunDot />
        </TaskSlot>
        <TaskSlot>
          <GithubTile />
          <RunDot />
        </TaskSlot>
        <TaskSlot>
          <RedTile />
          <RunDot />
        </TaskSlot>
        <TaskSlot>
          <FaWhatsapp size={31} color="#25d366" />
          <RunDot />
        </TaskSlot>
        <TaskSlot>
          <TerminalIcon />
          <RunDot />
        </TaskSlot>
        <TaskSlot>
          <VscVscode size={31} color="#1a9fe8" />
          <RunDot />
        </TaskSlot>
        <Tray>
          <ChevronUp size={22} strokeWidth={1.3} />
          <TrayLang>
            <span>ENG</span>
            <span>IN</span>
          </TrayLang>
          <TrayIcons>
            <Wifi size={20} strokeWidth={1.8} />
            <Volume1 size={20} strokeWidth={1.5} />
            <BatteryPlug />
          </TrayIcons>
          <Clock $align="right">
            <span>03:47 PM</span>
            <span>02-04-2024</span>
          </Clock>
          <Notify>2</Notify>
        </Tray>
      </Taskbar>
    </Screen>
  );
}
